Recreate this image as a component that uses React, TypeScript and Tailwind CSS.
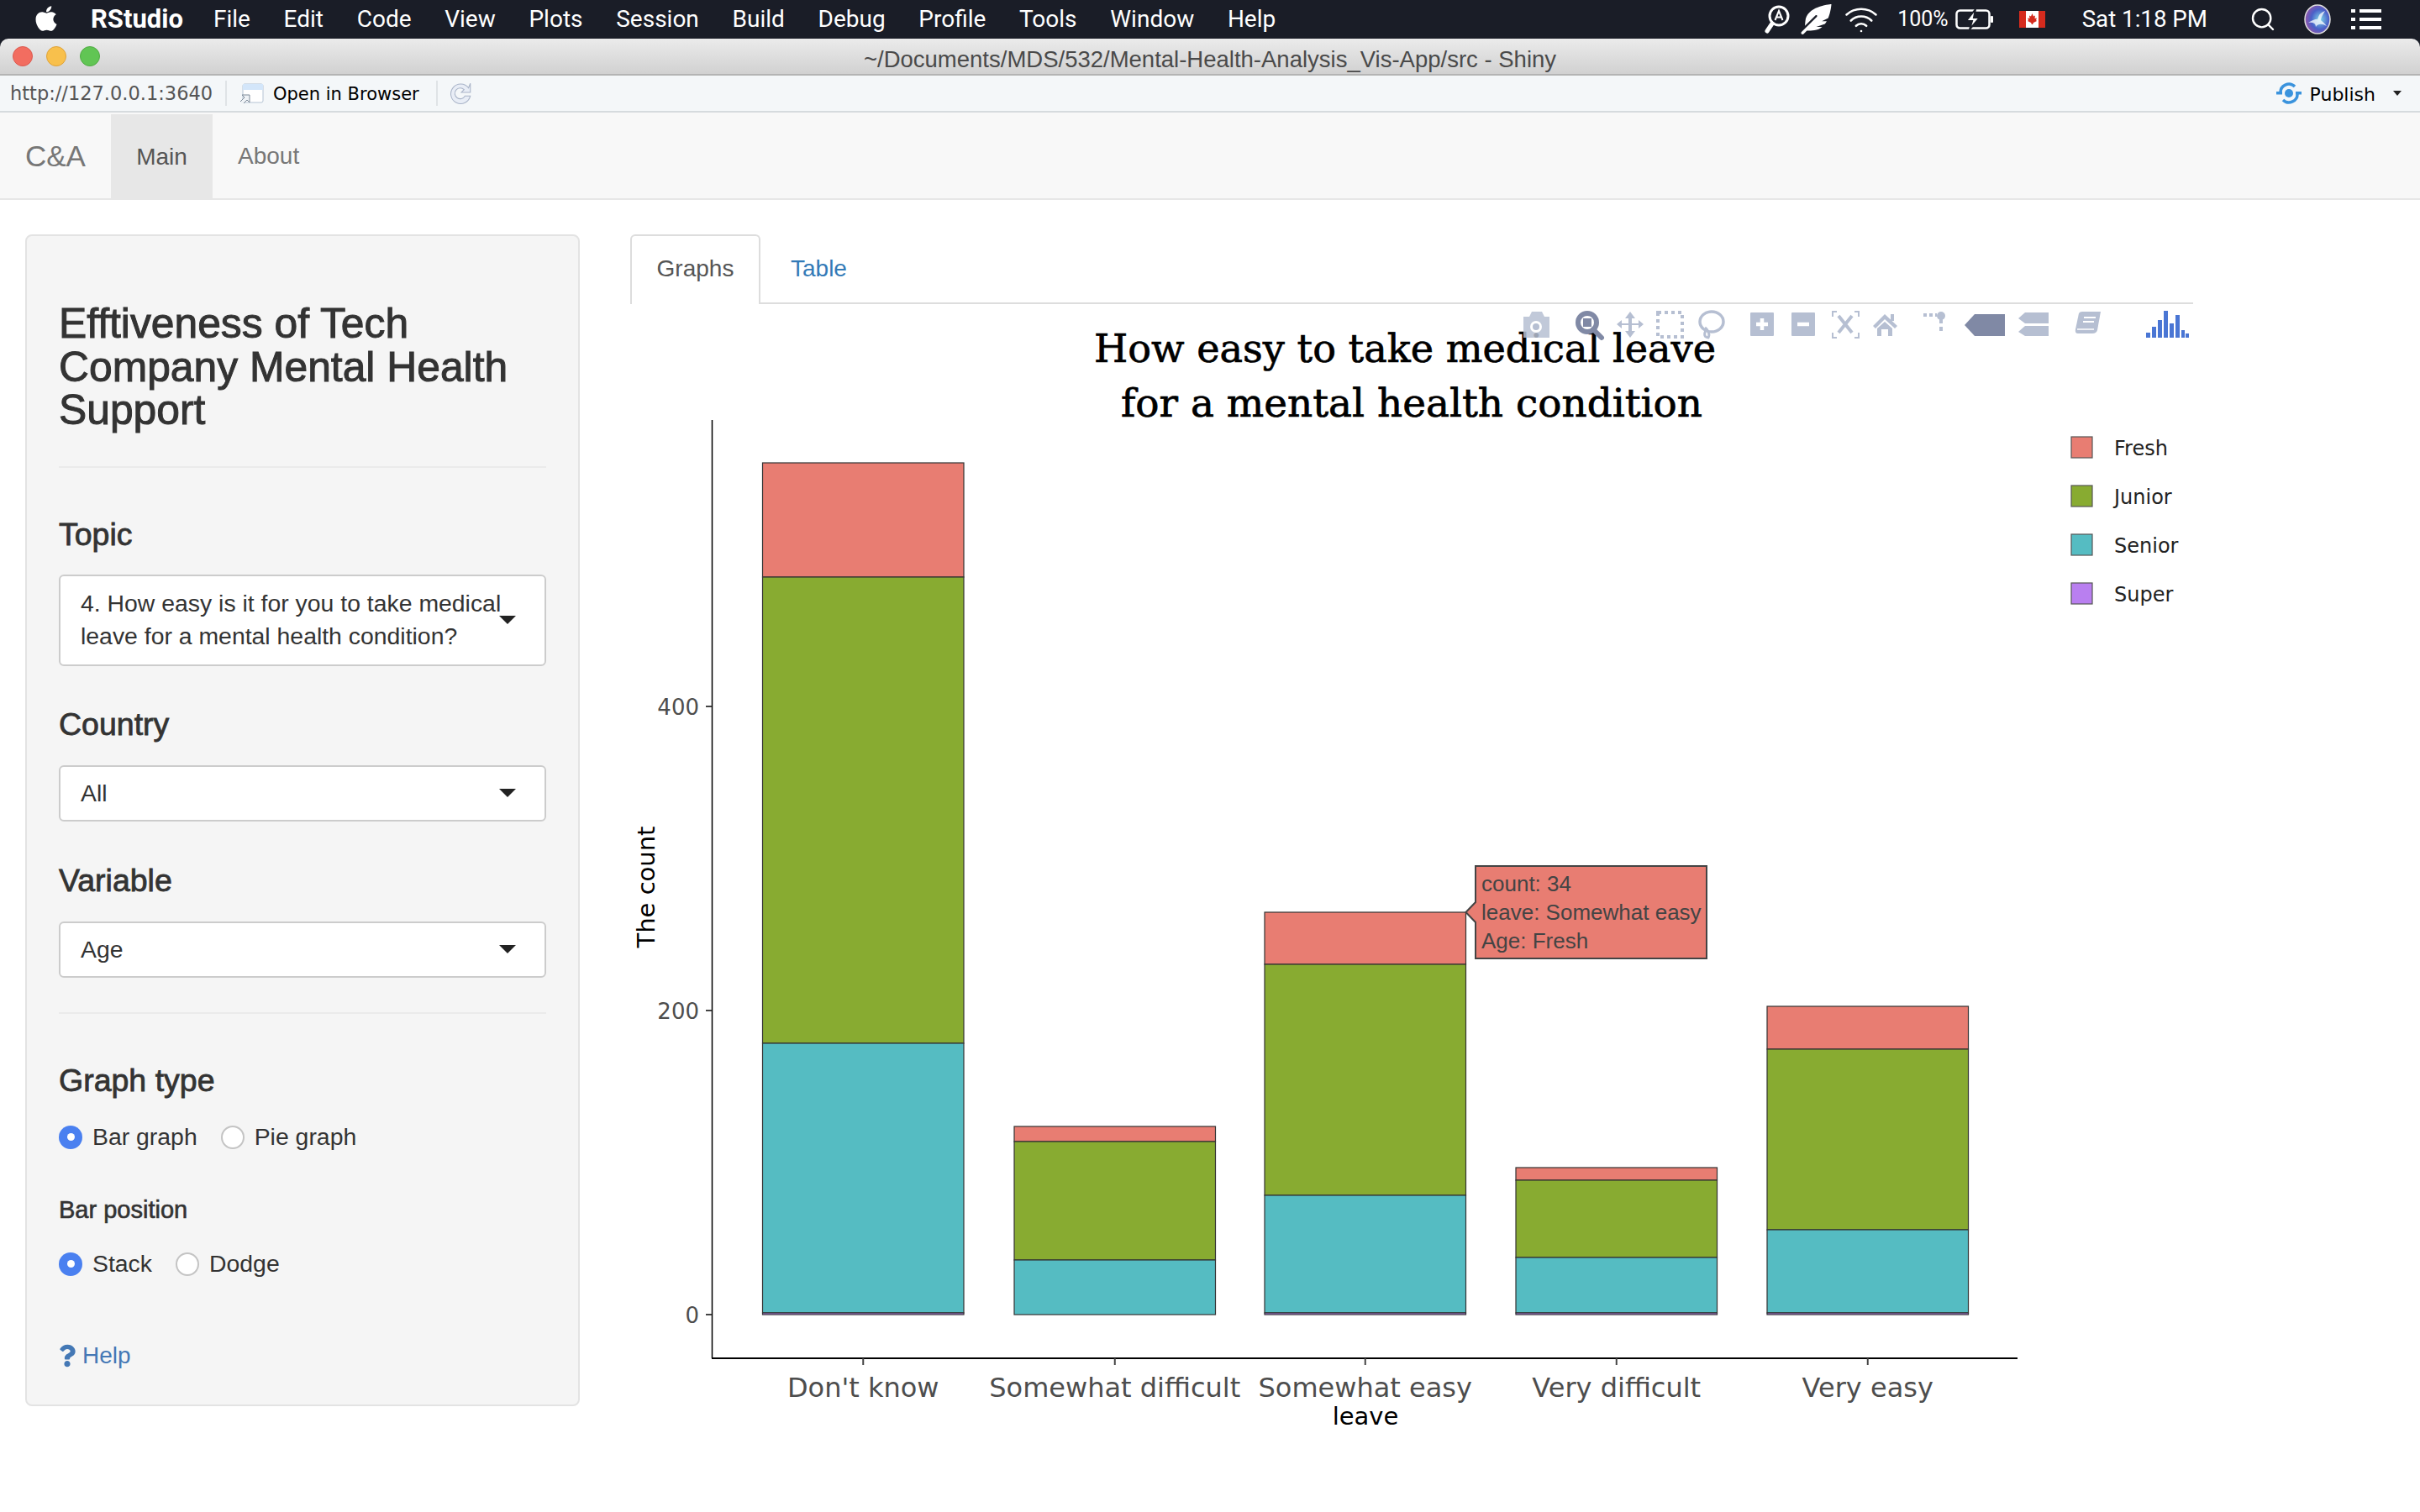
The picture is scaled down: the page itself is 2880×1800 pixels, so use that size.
import React from 'react';
import { Search, Wifi } from 'lucide-react';
import { FaApple, FaFeatherAlt, FaQuestion } from 'react-icons/fa';

const menuItems = ['File', 'Edit', 'Code', 'View', 'Plots', 'Session', 'Build', 'Debug', 'Profile', 'Tools', 'Window', 'Help'];

const RED = '#e87d72';
const GREEN = '#88ab31';
const TEAL = '#55bcc2';
const PURPLE = '#b97ff0';

// y values are page pixels, top to bottom: fresh, junior, senior, super
const bars = [
  { label: "Don't know", x: 907.5, fresh: 551, junior: 687, senior: 1242, sup: 1563 },
  { label: 'Somewhat difficult', x: 1207, fresh: 1341, junior: 1359, senior: 1500, sup: 1565 },
  { label: 'Somewhat easy', x: 1505, fresh: 1086, junior: 1148, senior: 1423, sup: 1563 },
  { label: 'Very difficult', x: 1804, fresh: 1390, junior: 1405, senior: 1497, sup: 1563 },
  { label: 'Very easy', x: 2103, fresh: 1198, junior: 1249, senior: 1464, sup: 1563 },
];

const legend = [
  { name: 'Fresh', color: RED, y: 520 },
  { name: 'Junior', color: GREEN, y: 578 },
  { name: 'Senior', color: TEAL, y: 636 },
  { name: 'Super', color: PURPLE, y: 694 },
];

function Caret() {
  return <span className="block w-0 h-0 border-x-[10px] border-x-transparent border-t-[10px] border-t-[#222]" />;
}

function Select({ lines, tall }: { lines: string[]; tall?: boolean }) {
  return (
    <div className={`${tall ? 'h-[109px]' : 'h-[67px]'} w-[580px] bg-white border-2 border-[#ccc] rounded-md flex items-center justify-between pl-[24px] pr-[34px]`}>
      <div className="text-[28.4px] leading-[39px] text-[#333] whitespace-nowrap">
        {lines.map((l) => (
          <div key={l}>{l}</div>
        ))}
      </div>
      <div className={tall ? 'ml-[-30px]' : ''}>
        <Caret />
      </div>
    </div>
  );
}

function Radio({ label, checked, className }: { label: string; checked?: boolean; className?: string }) {
  return (
    <div className={`flex items-center h-[28px] ${className ?? ''}`}>
      {checked ? (
        <span className="w-[28px] h-[28px] rounded-full bg-[#4a80f0] flex items-center justify-center">
          <span className="w-[9px] h-[9px] rounded-full bg-white" />
        </span>
      ) : (
        <span className="w-[28px] h-[28px] rounded-full bg-white border-2 border-[#c4c4c4]" />
      )}
      <span className="ml-[12px] text-[28.4px] text-[#333]">{label}</span>
    </div>
  );
}

function Sidebar() {
  const head = 'text-[37.5px] leading-[44px] text-[#333] [-webkit-text-stroke:0.8px_#333]';
  return (
    <aside className="w-[660px] h-[1395px] shrink-0 bg-[#f5f5f5] border-2 border-[#e3e3e3] rounded-lg pt-[79px] px-[38px]">
      <h2 className="text-[49.8px] leading-[51.5px] text-[#333] [-webkit-text-stroke:1px_#333]">
        Efftiveness of Tech
        <br />
        Company Mental Health
        <br />
        Support
      </h2>
      <div className="mt-[40px] h-[2px] w-[580px] bg-[#eaeaea]" />
      <div className={`mt-[57px] ${head}`}>Topic</div>
      <div className="mt-[26px]">
        <Select tall lines={['4. How easy is it for you to take medical', 'leave for a mental health condition?']} />
      </div>
      <div className={`mt-[47px] ${head}`}>Country</div>
      <div className="mt-[27px]">
        <Select lines={['All']} />
      </div>
      <div className={`mt-[48px] ${head}`}>Variable</div>
      <div className="mt-[27px]">
        <Select lines={['Age']} />
      </div>
      <div className="mt-[41px] h-[2px] w-[580px] bg-[#eaeaea]" />
      <div className={`mt-[57px] ${head}`}>Graph type</div>
      <div className="mt-[32px] flex">
        <Radio checked label="Bar graph" />
        <Radio label="Pie graph" className="ml-[28px]" />
      </div>
      <div className="mt-[55px] text-[29px] leading-[34px] text-[#333] [-webkit-text-stroke:0.6px_#333]">Bar position</div>
      <div className="mt-[34px] flex">
        <Radio checked label="Stack" />
        <Radio label="Dodge" className="ml-[28px]" />
      </div>
      <div className="mt-[75px] flex items-center h-[40px] text-[#4478b5] text-[28px]">
        <FaQuestion className="w-[20px] h-[28px]" />
        <span className="ml-[8px]">Help</span>
      </div>
    </aside>
  );
}

function MenuBar() {
  return (
    <div className="h-[46px] bg-[#1a1d27] flex items-center text-white text-[28px] font-['Roboto',sans-serif] shrink-0">
      <FaApple className="ml-[40px] w-[30px] h-[34px] mb-[3px]" />
      <span className="ml-[38px] text-[31px] font-bold">RStudio</span>
      <div className="ml-[36px] flex gap-[39.7px]">
        {menuItems.map((m) => (
          <span key={m}>{m}</span>
        ))}
      </div>
      <div className="ml-auto flex items-center">
        <svg width="30" height="34" viewBox="0 0 30 34" fill="none">
          <circle cx="17" cy="13" r="11" stroke="white" strokeWidth="3" />
          <path d="M9 22 L3 31" stroke="white" strokeWidth="5" strokeLinecap="round" />
          <path d="M12.5 18 L17 7 L21.5 18 M14 14.5 H20" stroke="white" strokeWidth="2" />
        </svg>
        <FaFeatherAlt className="ml-[13px] w-[37px] h-[36px]" />
        <Wifi className="ml-[10px] mr-[-4px] w-[50px] h-[42px]" strokeWidth={1.5} />
        <span className="ml-[22px] text-[25px]">100%</span>
        <svg className="ml-[8px]" width="46" height="24" viewBox="0 0 46 24" fill="none">
          <rect x="1.5" y="1.5" width="39" height="21" rx="4" stroke="white" strokeWidth="2.5" />
          <rect x="42" y="8" width="3" height="8" rx="1" fill="white" />
          <path d="M24 0 L13 14 H20 L17 24 L29 10 H22 Z" fill="white" stroke="#1a1d27" strokeWidth="2" />
        </svg>
        <svg className="ml-[30px]" width="31" height="20" viewBox="0 0 31 20">
          <rect width="31" height="20" fill="white" />
          <rect width="8" height="20" fill="#d52b1e" />
          <rect x="23" width="8" height="20" fill="#d52b1e" />
          <path d="M15.5 3 L17 6.5 L19 5.5 L18.5 9 L21 8.5 L20 11 L21 12 L17 14 L16 16 H15 L14 14 L10 12 L11 11 L10 8.5 L12.5 9 L12 5.5 L14 6.5 Z" fill="#d52b1e" />
        </svg>
        <span className="ml-[44px] text-[27.7px]">Sat 1:18 PM</span>
        <Search className="ml-[50px] w-[32px] h-[32px]" strokeWidth={1.8} />
        <svg className="ml-[33px]" width="32" height="36" viewBox="0 0 32 36">
          <defs>
            <radialGradient id="siri" cx="0.6" cy="0.5" r="0.7">
              <stop offset="0" stopColor="#7fd8e8" />
              <stop offset="0.5" stopColor="#4a60c8" />
              <stop offset="1" stopColor="#b04f9c" />
            </radialGradient>
          </defs>
          <ellipse cx="16" cy="18" rx="15" ry="17" fill="url(#siri)" stroke="#ddd" strokeWidth="1.5" />
          <path d="M5 22 Q14 17 16 18 Q18 10 25 8 Q20 16 20 19 Q24 22 27 26 Q18 21 14 27 Q14 21 5 22 Z" fill="white" opacity="0.75" />
        </svg>
        <svg className="ml-[24px] mr-[46px]" width="36" height="26" viewBox="0 0 36 26" fill="white">
          <rect x="0" y="1" width="5" height="4" />
          <rect x="10" y="1" width="26" height="4" />
          <rect x="0" y="11" width="5" height="4" />
          <rect x="10" y="11" width="26" height="4" />
          <rect x="0" y="21" width="5" height="4" />
          <rect x="10" y="21" width="26" height="4" />
        </svg>
      </div>
    </div>
  );
}

function TitleBar() {
  return (
    <div className="h-[44px] shrink-0 bg-[#1a1d27]">
      <div className="relative h-[44px] rounded-t-[10px] bg-gradient-to-b from-[#ebebeb] to-[#d1d1d1] border-b-2 border-[#b4b4b4] flex items-center pl-[15px]">
        <span className="w-[24px] h-[24px] rounded-full bg-[#f26d60] border border-[#dc5a50]" />
        <span className="ml-[16px] w-[24px] h-[24px] rounded-full bg-[#f8c04c] border border-[#dfa238]" />
        <span className="ml-[16px] w-[24px] h-[24px] rounded-full bg-[#61c554] border border-[#50ab44]" />
        <span className="absolute inset-x-0 top-[4px] text-center text-[27.5px] text-[#4a4a4a] font-['Liberation_Sans',sans-serif]">
          ~/Documents/MDS/532/Mental-Health-Analysis_Vis-App/src - Shiny
        </span>
      </div>
    </div>
  );
}

function AddressBar() {
  return (
    <div className="h-[44px] shrink-0 bg-[#f4f7f9] border-b-2 border-[#d6dbde] flex items-center font-['DejaVu_Sans',sans-serif] text-[21px]">
      <span className="ml-[12px] w-[240px] pt-[2px] text-[22.5px] text-[#555] whitespace-nowrap">http://127.0.0.1:3640</span>
      <span className="ml-[16px] w-[2px] h-[30px] bg-[#dfe3e6]" />
      <svg className="ml-[14px]" width="30" height="24" viewBox="0 0 30 24" fill="none">
        <rect x="5" y="1" width="24" height="22" rx="2" fill="#fff" stroke="#b5c4d4" />
        <rect x="5" y="1" width="24" height="7" fill="#d3e6fa" />
        <path d="M2 22 L7 17 L4 14 H13 V23 L10 20 L5 25" fill="#eef2f6" stroke="#7c8a98" />
      </svg>
      <span className="ml-[11px] pt-[3px] text-black whitespace-nowrap">Open in Browser</span>
      <span className="ml-[20px] w-[2px] h-[30px] bg-[#dfe3e6]" />
      <svg className="ml-[12px]" width="30" height="32" viewBox="0 0 28 30" fill="none">
        <path d="M23 9 A11 11 0 1 0 25 18 L19 18 A6 6 0 1 1 18 11 L15 14 H25 V4 Z" fill="#e8edf6" stroke="#a9b4c8" />
      </svg>
      <div className="ml-auto flex items-center text-[22px]">
        <svg width="30" height="26" viewBox="0 0 30 26" fill="none">
          <circle cx="15" cy="13" r="5" fill="#3a93dd" />
          <path d="M5 13 A10 10 0 0 1 22 5 M25 13 A10 10 0 0 1 8 21" stroke="#3a93dd" strokeWidth="3.5" />
          <rect x="0" y="11" width="7" height="3.5" fill="#3a93dd" />
          <rect x="23" y="11" width="7" height="3.5" fill="#3a93dd" />
        </svg>
        <span className="ml-[10px] pt-[2px] text-black">Publish</span>
        <span className="ml-[21px] mr-[22px] w-0 h-0 border-x-[5px] border-x-transparent border-t-[6px] border-t-[#222]" />
      </div>
    </div>
  );
}

function NavBar() {
  return (
    <div className="h-[104px] shrink-0 bg-[#f8f8f8] border-b-2 border-[#e7e7e7] flex font-['Liberation_Sans',sans-serif]">
      <span className="ml-[30px] w-[102px] self-center pt-[2px] text-[35px] text-[#777]">C&amp;A</span>
      <div className="w-[121px] mt-[2px] pt-[1px] bg-[#e7e7e7] flex items-center justify-center text-[28px] text-[#555]">Main</div>
      <span className="ml-[30px] self-center pt-[2px] text-[28px] text-[#777]">About</span>
    </div>
  );
}

function Toolbar() {
  const c = '#b6bfd2';
  const a = '#8089a5';
  return (
    <g>
      {/* camera */}
      <path d="M1813 377 H1820 L1823 371 H1835 L1838 377 H1844 V402 H1813 Z" fill={c} fillOpacity="0.85" />
      <circle cx="1828" cy="389" r="7" fill="#fff" />
      <circle cx="1828" cy="389" r="4" fill={c} />
      {/* zoom */}
      <circle cx="1889" cy="384" r="11" fill="#fff" stroke={a} strokeWidth="6" />
      <rect x="1884" y="379" width="10" height="10" fill={a} />
      <path d="M1896 392 L1906 402" stroke={a} strokeWidth="6" strokeLinecap="round" />
      {/* pan */}
      <path d="M1940 371 L1946 379 H1942 V385 H1950 V381 L1956 386 L1950 391 V387 H1942 V394 H1946 L1940 402 L1934 394 H1938 V387 H1930 V391 L1924 386 L1930 381 V385 H1938 V379 H1934 Z" fill={c} />
      {/* box select */}
      <rect x="1973" y="372" width="29" height="29" fill="none" stroke={c} strokeWidth="4" strokeDasharray="4 4" />
      {/* lasso */}
      <ellipse cx="2037" cy="383" rx="14" ry="12" fill="none" stroke={c} strokeWidth="3.5" />
      <path d="M2030 393 Q2026 402 2034 402 M2029 390 Q2036 396 2033 402" fill="none" stroke={c} strokeWidth="3" />
      {/* zoom in, zoom out */}
      <rect x="2083" y="372" width="28" height="28" rx="1" fill={c} />
      <path d="M2097 379 V393 M2090 386 H2104" stroke="#fff" strokeWidth="4.5" />
      <rect x="2132" y="372" width="28" height="28" rx="1" fill={c} />
      <path d="M2139 386 H2153" stroke="#fff" strokeWidth="4.5" />
      {/* autoscale */}
      <path d="M2186 371 H2181 V377 M2207 371 H2212 V377 M2186 402 H2181 V396 M2207 402 H2212 V396" fill="none" stroke={c} strokeWidth="2" />
      <path d="M2188 376 L2204 396 M2204 376 L2188 396" stroke={c} strokeWidth="4" />
      {/* home */}
      <path d="M2243 374 L2258 388 L2255 391 L2243 380 L2232 391 L2229 388 Z" fill={c} />
      <path d="M2234 391 L2243 383 L2252 391 V400 H2247 V392 H2239 V400 H2234 Z" fill={c} />
      <rect x="2250" y="374" width="4" height="8" fill={c} />
      {/* spikes */}
      <circle cx="2310" cy="376" r="5" fill={c} />
      <path d="M2310 380 V398" stroke={c} strokeWidth="4" strokeDasharray="5 4" />
      <path d="M2289 375 H2305" stroke={c} strokeWidth="4" strokeDasharray="4 3" />
      {/* hover closest, compare */}
      <path d="M2338 387 L2350 374 H2386 V400 H2350 Z" fill={a} />
      <path d="M2402 379 L2410 372 H2438 V385 H2410 Z M2402 395 L2410 388 H2438 V400 H2410 Z" fill={c} />
      {/* book */}
      <path d="M2474 373 Q2475 371 2478 371 H2500 L2496 393 Q2495 397 2490 397 H2473 Q2469 397 2470 392 Z" fill={c} />
      <path d="M2480 378 H2494 M2479 383 H2492" stroke="#fff" strokeWidth="2" />
      <path d="M2472 392 H2492" stroke="#fff" strokeWidth="1.5" />
      {/* plotly */}
      <g fill="#4a76d4">
        <rect x="2554" y="396" width="5" height="6" />
        <rect x="2561" y="389" width="5" height="13" />
        <rect x="2568" y="381" width="5" height="21" />
        <rect x="2575" y="370" width="5" height="32" />
        <rect x="2582" y="385" width="5" height="17" />
        <rect x="2589" y="375" width="5" height="27" />
        <rect x="2596" y="393" width="4" height="9" />
        <rect x="2601" y="397" width="4" height="5" />
      </g>
    </g>
  );
}

function Chart() {
  const sans = "'DejaVu Sans', sans-serif";
  const barW = 239.5;
  return (
    <svg width="1860" height="1380" viewBox="750 362 1860 1380" className="block">
      <text x="1302" y="431" fontFamily="'DejaVu Serif', serif" fontSize="46" textLength="740" lengthAdjust="spacingAndGlyphs" fill="#000" stroke="#000" strokeWidth="0.7">
        How easy to take medical leave
      </text>
      <text x="1334" y="496" fontFamily="'DejaVu Serif', serif" fontSize="46" textLength="692" lengthAdjust="spacingAndGlyphs" fill="#000" stroke="#000" strokeWidth="0.7">
        for a mental health condition
      </text>

      {bars.map((b) => (
        <g key={b.label} stroke="#333" strokeWidth="1.2">
          <rect x={b.x} y={b.fresh} width={barW} height={b.junior - b.fresh} fill={RED} />
          <rect x={b.x} y={b.junior} width={barW} height={b.senior - b.junior} fill={GREEN} />
          <rect x={b.x} y={b.senior} width={barW} height={b.sup - b.senior} fill={TEAL} />
          {b.sup < 1565 && <rect x={b.x} y={b.sup} width={barW} height={1565 - b.sup} fill={PURPLE} />}
        </g>
      ))}

      <path d="M847.5 500 V1617" stroke="#000" strokeWidth="1.5" />
      <path d="M847 1617 H2401" stroke="#000" strokeWidth="2" />
      {[841, 1203, 1565].map((y) => (
        <path key={y} d={`M840 ${y} H847`} stroke="#444" strokeWidth="2" />
      ))}
      {bars.map((b) => (
        <path key={b.label} d={`M${b.x + barW / 2} 1617 V1625`} stroke="#444" strokeWidth="2" />
      ))}
      <g fontFamily={sans} fontSize="26" fill="#4d4d4d" textAnchor="end">
        <text x="832" y="851">400</text>
        <text x="832" y="1213">200</text>
        <text x="832" y="1575">0</text>
      </g>
      <text transform="translate(779 1056) rotate(-90)" fontFamily={sans} fontSize="29" fill="#000" textAnchor="middle">
        The count
      </text>
      <g fontFamily={sans} fontSize="32" fill="#4d4d4d" textAnchor="middle">
        {bars.map((b) => (
          <text key={b.label} x={b.x + barW / 2} y="1663">
            {b.label}
          </text>
        ))}
      </g>
      <text x="1625" y="1696" fontFamily={sans} fontSize="29" fill="#000" textAnchor="middle">
        leave
      </text>

      {legend.map((l) => (
        <g key={l.name}>
          <rect x="2465" y={l.y} width="25" height="25" fill={l.color} stroke="#555" strokeWidth="1.2" />
          <text x="2516" y={l.y + 22} fontFamily={sans} fontSize="24" fill="#222">
            {l.name}
          </text>
        </g>
      ))}

      {/* hover label */}
      <path d="M1744.5 1086 L1756 1074 V1031 H2031 V1141 H1756 V1098 Z" fill={RED} stroke="#444" strokeWidth="2" />
      <g fontFamily="'Liberation Sans', sans-serif" fontSize="26" fill="#444">
        <text x="1763" y="1061">count: 34</text>
        <text x="1763" y="1095">leave: Somewhat easy</text>
        <text x="1763" y="1129">Age: Fresh</text>
      </g>

      <Toolbar />
    </svg>
  );
}

export default function App() {
  return (
    <div className="w-[2880px] h-[1800px] overflow-hidden bg-white flex flex-col font-['Liberation_Sans',sans-serif]">
      <MenuBar />
      <TitleBar />
      <AddressBar />
      <NavBar />
      <div className="flex pt-[41px] pl-[30px]">
        <Sidebar />
        <main className="ml-[60px] w-[1860px]">
          <div className="h-[83px] flex items-end border-b-2 border-[#ddd]">
            <div className="w-[155px] h-[83px] mb-[-2px] pb-[3px] bg-white border-2 border-b-0 border-[#ddd] rounded-t-md flex items-center justify-center text-[28px] text-[#555]">
              Graphs
            </div>
            <div className="h-[83px] pt-[2px] flex items-center ml-[36px] text-[28px] text-[#337ab7]">Table</div>
          </div>
          <Chart />
        </main>
      </div>
    </div>
  );
}
